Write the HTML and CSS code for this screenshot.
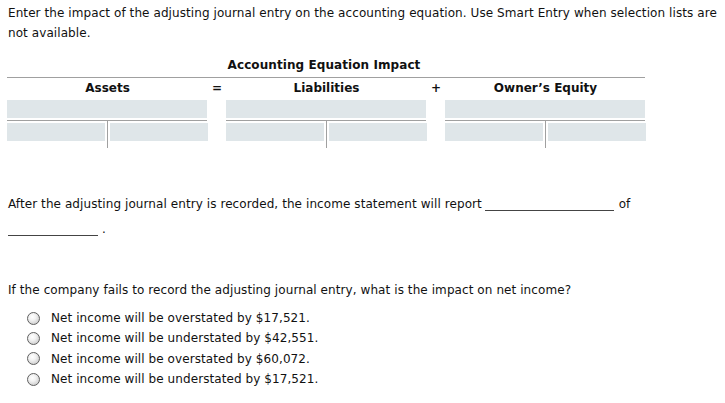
FILE: index.html
```html
<!DOCTYPE html>
<html>
<head>
<meta charset="utf-8">
<link rel="stylesheet" href="styles.css">
</head>
<body>
<p class="intro">Enter the impact of the adjusting journal entry on the accounting equation. Use Smart Entry when selection lists are not available.</p>

<div class="eq">
  <div class="eq-title">Accounting Equation Impact</div>
  <div class="eq-grid">
    <div class="col">
      <div class="col-head">Assets</div>
      <div class="box wide"></div>
      <div class="tacct"><div class="box"></div><div class="divider"></div><div class="box"></div></div>
    </div>
    <div class="sign">=</div>
    <div class="col">
      <div class="col-head">Liabilities</div>
      <div class="box wide"></div>
      <div class="tacct"><div class="box"></div><div class="divider"></div><div class="box"></div></div>
    </div>
    <div class="sign">+</div>
    <div class="col">
      <div class="col-head">Owner’s Equity</div>
      <div class="box wide"></div>
      <div class="tacct"><div class="box"></div><div class="divider"></div><div class="box"></div></div>
    </div>
  </div>
</div>

<p class="report">After the adjusting journal entry is recorded, the income statement will report <span class="blank long"></span> of<br><span class="blank short"></span> .</p>

<p class="question">If the company fails to record the adjusting journal entry, what is the impact on net income?</p>
<ul class="options">
  <li><span class="radio"></span>Net income will be overstated by $17,521.</li>
  <li><span class="radio"></span>Net income will be understated by $42,551.</li>
  <li><span class="radio"></span>Net income will be overstated by $60,072.</li>
  <li><span class="radio"></span>Net income will be understated by $17,521.</li>
</ul>
</body>
</html>
```
FILE: styles.css
```css
* { box-sizing: border-box; }
html, body { margin: 0; padding: 0; background: #fff; }
body {
  font-family: "DejaVu Sans", Verdana, sans-serif;
  font-size: 12px;
  letter-spacing: 0.08px;
  color: #111;
  padding: 3px 0 0 8px;
}
p { margin: 0; }
.intro { line-height: 20px; }

.eq { margin: 15px 0 0 -1px; width: 638px; }
.eq-title {
  text-align: center;
  font-weight: bold;
  line-height: 14px;
  padding-right: 4px;
}
.eq-grid {
  margin-top: 5px;
  border-top: 1px solid #a0a0a0;
  display: grid;
  grid-template-columns: 201px 18px 201px 18px 201px;
}
.col-head, .sign {
  font-weight: bold;
  text-align: center;
  height: 22px;
  line-height: 20px;
}
.col-head { letter-spacing: 0; }
.box { background: #dfe6e9; height: 18px; }
.box.wide { width: 200px; }
.tacct {
  margin-top: 2px;
  border-top: 1px solid #a0a0a0;
  width: 200px;
  display: grid;
  grid-template-columns: 98px 5px 98px;
}
.tacct .box { margin-top: 2px; }
.divider { width: 1px; height: 27px; background: #a0a0a0; margin-left: 2px; }

.report { margin-top: 44px; line-height: 25px; }
.blank {
  display: inline-block;
  border-bottom: 1px solid #444;
  vertical-align: -3px;
  height: 10px;
}
.blank.long { width: 129px; margin: 0 1px 0 -1px; }
.blank.short { width: 90px; }

.question { margin-top: 38px; line-height: 20px; }
.options { list-style: none; margin: 8px 0 0; padding: 0 0 0 19px; }
.options li { height: 20.3px; line-height: 20px; display: flex; align-items: center; }
.radio {
  display: inline-block;
  flex: none;
  width: 13px; height: 13px;
  border-radius: 50%;
  border: 1px solid #5f5f5f;
  background: radial-gradient(circle at 40% 35%, #ffffff 0%, #f2f2f2 35%, #bdbdbd 100%);
  margin-right: 11px;
}
```
